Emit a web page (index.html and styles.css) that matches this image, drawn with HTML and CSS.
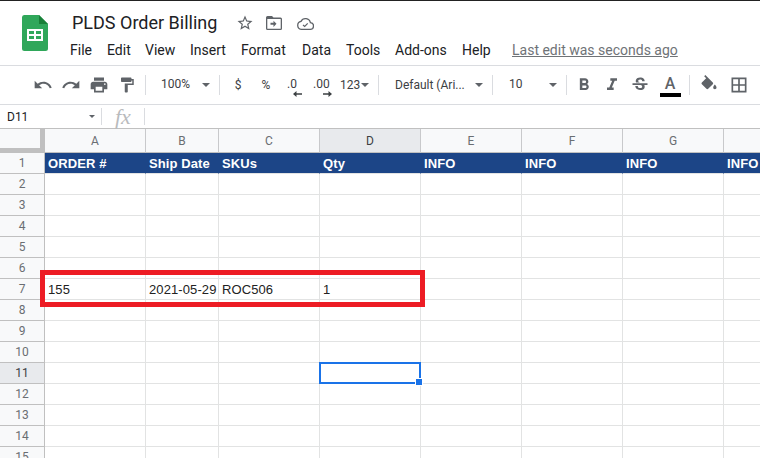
FILE: index.html
```html
<!DOCTYPE html>
<html lang="en">
<head>
<meta charset="utf-8">
<title>PLDS Order Billing</title>
<link rel="stylesheet" href="styles.css">
</head>
<body>
<div class="app">
  <header class="top">
    <svg class="logo" viewBox="0 0 26 36" width="26" height="36">
      <path fill="#2fa75a" d="M2 0H17L26 9V33.500A2.500 2.500 0 0 1 23.500 36H2.500A2.500 2.500 0 0 1 0 33.500V2.500A2.500 2.500 0 0 1 2 0Z"/>
      <path fill="#188038" d="M17 0L26 9H17Z"/>
      <path fill="#fff" fill-rule="evenodd" d="M5 14H21V26H5ZM7 16V19H12V16ZM14 16V19H19V16ZM7 21V24H12V21ZM14 21V24H19V21Z"/>
    </svg>
    <div class="titles">
      <div class="title-row">
        <span class="doc-title">PLDS Order Billing</span>
        <svg class="star" viewBox="0 0 24 24" width="18" height="18"><path d="M22 9.240l-7.190-.62L12 2 9.190 8.630 2 9.240l5.460 4.730L5.820 21 12 17.270 18.180 21l-1.630-7.030L22 9.240zM12 15.400l-3.760 2.270 1-4.280-3.320-2.880 4.380-.38L12 6.100l1.710 4.040 4.380.38-3.320 2.880 1 4.280L12 15.400z"/></svg>
        <svg class="move" viewBox="0 0 16 14" width="16" height="14"><path fill-rule="evenodd" d="M1.500 0H6L7.500 1.500H14.500A1.500 1.500 0 0 1 16 3V12.500A1.500 1.500 0 0 1 14.500 14H1.500A1.500 1.500 0 0 1 0 12.500V1.500A1.500 1.500 0 0 1 1.500 0ZM1.300 3V12.700H14.700V3ZM7.500 4.700L10.500 7.800L7.500 10.900V8.800H4.500V6.800H7.500Z"/></svg>
        <svg class="cloud" viewBox="0 0 17 13" width="17" height="13"><path fill="none" stroke="#5f6368" stroke-width="1.300" d="M4.200 12.300H13A3.300 3.300 0 0 0 13.400 5.700A5 5 0 0 0 4 4.400A4 4 0 0 0 4.200 12.300Z"/><path fill="none" stroke="#5f6368" stroke-width="1.200" d="M6 8L7.700 9.500L10.700 6.300"/></svg>
      </div>
      <nav class="menu">
        <span class="m-file">File</span><span class="m-edit">Edit</span><span class="m-view">View</span><span class="m-insert">Insert</span><span class="m-format">Format</span><span class="m-data">Data</span><span class="m-tools">Tools</span><span class="m-addons">Add-ons</span><span class="m-help">Help</span><span class="last-edit">Last edit was seconds ago</span>
      </nav>
    </div>
  </header>

  <div class="toolbar">
    <span class="tb"><svg viewBox="0 0 24 24" width="20" height="20"><path d="M12.500 8c-2.650 0-5.050.99-6.900 2.600L2 7v9h9l-3.620-3.620c1.390-1.160 3.160-1.880 5.120-1.880 3.540 0 6.550 2.310 7.600 5.500l2.370-.78C21.080 11.030 17.150 8 12.500 8z"/></svg></span>
    <span class="tb"><svg viewBox="0 0 24 24" width="20" height="20"><path d="M18.400 10.600C16.550 8.990 14.150 8 11.500 8c-4.650 0-8.580 3.030-9.960 7.220L3.900 16c1.050-3.190 4.050-5.500 7.600-5.500 1.950 0 3.730.72 5.120 1.880L13 16h9V7l-3.600 3.600z"/></svg></span>
    <span class="tb"><svg viewBox="0 0 24 24" width="20" height="20"><path d="M19 8H5c-1.660 0-3 1.340-3 3v6h4v4h12v-4h4v-6c0-1.660-1.340-3-3-3zm-3 11H8v-5h8v5zm3-7c-.55 0-1-.45-1-1s.45-1 1-1 1 .45 1 1-.45 1-1 1zm-1-9H6v4h12V3z"/></svg></span>
    <span class="tb"><svg viewBox="0 0 24 24" width="18" height="18"><path d="M18 4V3c0-.55-.45-1-1-1H5c-.55 0-1 .45-1 1v4c0 .55.45 1 1 1h12c.55 0 1-.45 1-1V6h1v4H9v11c0 .55.45 1 1 1h2c.55 0 1-.45 1-1v-9h8V4h-3z"/></svg></span>
    <span class="sep sep-a"></span>
    <span class="tsel w-zoom"><span class="tval tval-up">100%</span><i class="caret"></i></span>
    <span class="sep"></span>
    <span class="tb tx tb-dollar">$</span>
    <span class="tb tx">%</span>
    <span class="tb dec dec-one"><span class="dec-t">.0</span><svg viewBox="0 0 9 6" width="9" height="6"><path d="M0 3L3.500 0V2.300H9V3.700H3.500V6Z"/></svg></span>
    <span class="tb dec dec-two"><span class="dec-t">.00</span><svg viewBox="0 0 9 6" width="9" height="6"><path d="M9 3L5.500 0V2.300H0V3.700H5.500V6Z"/></svg></span>
    <span class="tsel w-123"><span class="tval">123</span><i class="caret caret-near"></i></span>
    <span class="sep"></span>
    <span class="tsel w-font"><span class="tval">Default (Ari...</span><i class="caret"></i></span>
    <span class="sep"></span>
    <span class="tsel w-size"><span class="tval tval-up">10</span><i class="caret"></i></span>
    <span class="sep"></span>
    <span class="tb tb-b"><svg viewBox="0 0 24 24" width="20" height="20"><path d="M15.600 10.790c.97-.67 1.650-1.770 1.650-2.790 0-2.260-1.750-4-4-4H7v14h7.040c2.090 0 3.710-1.700 3.710-3.790 0-1.520-.86-2.820-2.150-3.420zM10 6.500h3c.83 0 1.500.67 1.500 1.500s-.67 1.500-1.500 1.500h-3v-3zm3.500 9H10v-3h3.500c.83 0 1.500.67 1.500 1.500s-.67 1.500-1.500 1.500z"/></svg></span>
    <span class="tb"><svg viewBox="0 0 24 24" width="20" height="20"><path d="M10 4v3h2.210l-3.420 8H6v3h8v-3h-2.210l3.420-8H18V4z"/></svg></span>
    <span class="tb"><svg viewBox="0 0 24 24" width="20" height="20"><path d="M6.850 7.080C6.850 4.370 9.450 3 12.240 3c1.640 0 3 .49 3.900 1.280.77.65 1.460 1.730 1.460 3.240h-3.010c0-.31-.05-.59-.15-.85-.29-.86-1.200-1.280-2.250-1.280-1.860 0-2.340 1.020-2.340 1.700 0 .48.25.88.74 1.210.38.25.77.48 1.410.7H7.390c-.21-.34-.54-.89-.54-1.920zM21 12v-2H3v2h9.620c1.150.45 1.960.75 1.960 1.970 0 1-.81 1.670-2.280 1.670-1.540 0-2.930-.54-2.930-2.510H6.400c0 .55.08 1.130.24 1.580.81 2.290 3.290 3.300 5.670 3.300 2.270 0 5.300-.89 5.300-4.050 0-.3-.01-1.160-.48-1.940H21V12z"/></svg></span>
    <span class="tb tb-color"><span class="color-a">A</span><span class="color-bar"></span></span>
    <span class="sep sep-b"></span>
    <span class="tb tb-fill"><svg viewBox="0 0 24 24" width="20" height="20"><path d="M16.560 8.940L7.620 0 6.210 1.410l2.380 2.380-5.150 5.150c-.59.59-.59 1.540 0 2.120l5.500 5.500c.29.29.68.44 1.060.44s.77-.15 1.060-.44l5.500-5.500c.59-.58.59-1.530 0-2.120z"/><path d="M19 11.500s-2 2.170-2 3.500c0 1.100.9 2 2 2s2-.9 2-2c0-1.330-2-3.500-2-3.500z"/></svg></span>
    <span class="tb"><svg viewBox="0 0 24 24" width="20" height="20"><path d="M3 3v18h18V3H3zm8 16H5v-6h6v6zm0-8H5V5h6v6zm8 8h-6v-6h6v6zm0-8h-6V5h6v6z"/></svg></span>
  </div>

  <div class="formula">
    <span class="name-box">D11<i class="caret caret-small"></i></span>
    <span class="fx">fx</span>
  </div>

  <div class="sheet">
    <table class="grid">
      <colgroup><col class="c-row"><col class="c-wide"><col class="c-narrow"><col class="c-wide"><col class="c-wide"><col class="c-wide"><col class="c-wide"><col class="c-wide"><col class="c-wide"></colgroup>
      <thead>
        <tr><th class="corner"></th><th>A</th><th>B</th><th>C</th><th class="active">D</th><th>E</th><th>F</th><th>G</th><th>H</th></tr>
      </thead>
      <tbody>
        <tr class="banner"><th>1</th><td>ORDER #</td><td>Ship Date</td><td>SKUs</td><td>Qty</td><td>INFO</td><td>INFO</td><td>INFO</td><td>INFO</td></tr>
        <tr><th>2</th><td></td><td></td><td></td><td></td><td></td><td></td><td></td><td></td></tr>
        <tr><th>3</th><td></td><td></td><td></td><td></td><td></td><td></td><td></td><td></td></tr>
        <tr><th>4</th><td></td><td></td><td></td><td></td><td></td><td></td><td></td><td></td></tr>
        <tr><th>5</th><td></td><td></td><td></td><td></td><td></td><td></td><td></td><td></td></tr>
        <tr><th>6</th><td></td><td></td><td></td><td></td><td></td><td></td><td></td><td></td></tr>
        <tr><th>7</th><td>155</td><td>2021-05-29</td><td>ROC506</td><td>1</td><td></td><td></td><td></td><td></td></tr>
        <tr><th>8</th><td></td><td></td><td></td><td></td><td></td><td></td><td></td><td></td></tr>
        <tr><th>9</th><td></td><td></td><td></td><td></td><td></td><td></td><td></td><td></td></tr>
        <tr><th>10</th><td></td><td></td><td></td><td></td><td></td><td></td><td></td><td></td></tr>
        <tr><th class="active">11</th><td></td><td></td><td></td><td></td><td></td><td></td><td></td><td></td></tr>
        <tr><th>12</th><td></td><td></td><td></td><td></td><td></td><td></td><td></td><td></td></tr>
        <tr><th>13</th><td></td><td></td><td></td><td></td><td></td><td></td><td></td><td></td></tr>
        <tr><th>14</th><td></td><td></td><td></td><td></td><td></td><td></td><td></td><td></td></tr>
        <tr><th>15</th><td></td><td></td><td></td><td></td><td></td><td></td><td></td><td></td></tr>
      </tbody>
    </table>
    <div class="selection"><span class="handle"></span></div>
    <div class="callout"></div>
  </div>
</div>
</body>
</html>
```
FILE: styles.css
```css
* { box-sizing: border-box; }
html, body { margin: 0; padding: 0; background: #fff; }
body { width: 760px; height: 458px; overflow: hidden; font-family: Roboto, "Liberation Sans", sans-serif; color: #202124; }
.app { width: 760px; height: 458px; overflow: hidden; border-top: 1px solid #222; display: flex; flex-direction: column; }

.top { height: 65px; border-bottom: 1px solid #dadce0; display: flex; flex: none; padding-left: 22px; }
.logo { margin-top: 14px; flex: none; }
.titles { margin-left: 22px; display: flex; flex-direction: column; }
.title-row { display: flex; align-items: center; height: 22px; margin-top: 11px; padding-left: 2px; }
.doc-title { font-size: 18px; line-height: 22px; width: 146px; white-space: nowrap; color: #202124; }
.star { fill: #5f6368; margin-left: 18px; }
.move { fill: #5f6368; margin-left: 12px; }
.cloud { margin-left: 15px; }
.menu { display: flex; align-items: baseline; font-size: 14px; line-height: 18px; margin-top: 7px; white-space: nowrap; }
.menu span { display: block; }
.m-file { width: 37px; } .m-edit { width: 38px; } .m-view { width: 45px; } .m-insert { width: 51px; }
.m-format { width: 61px; } .m-data { width: 44px; } .m-tools { width: 49px; } .m-addons { width: 67px; } .m-help { width: 50px; }
.last-edit { color: #6f7377; text-decoration: underline; }

.toolbar { height: 39px; flex: none; border-bottom: 1px solid #dadce0; display: flex; align-items: center; padding-left: 29px; font-size: 12px; color: #3c4043; }
.tb { width: 28px; height: 28px; display: flex; align-items: center; justify-content: center; flex: none; }
.tb svg { fill: #5f6368; }
.tx { font-size: 12px; color: #3c4043; }
.tb-dollar { margin-left: 4px; }
.sep { width: 1px; height: 20px; background: #dadce0; flex: none; }
.sep-a { margin-left: 4px; }
.tsel { display: flex; align-items: center; height: 28px; flex: none; white-space: nowrap; }
.w-zoom { width: 73px; padding-left: 15px; }
.w-123 { width: 32px; margin-right: 6px; }
.w-font { width: 113px; padding-left: 16px; }
.w-size { width: 73px; padding-left: 16px; }
.tval { display: block; }
.tval-up { margin-bottom: 3px; }
.caret { display: block; margin-left: auto; margin-right: 9px; width: 0; height: 0; border-left: 4px solid transparent; border-right: 4px solid transparent; border-top: 4px solid #5f6368; }
.caret-near { margin-right: 3px; }
.caret-small { margin-left: auto; margin-right: 0; border-left-width: 3px; border-right-width: 3px; border-top-width: 3px; }
.dec { flex-direction: column; width: 30px; align-items: flex-start; justify-content: flex-start; padding-top: 6px; }
.dec svg { fill: #3c4043; margin-top: 0; }
.dec-t { font-size: 12px; line-height: 14px; height: 14px; }
.dec-one { padding-left: 7px; }
.dec-one svg { margin-left: 6px; }
.dec-two { padding-left: 3px; }
.dec-two svg { margin-left: 10px; }
.tb-b { margin-left: 3px; }
.tb-color { flex-direction: column; justify-content: flex-start; padding-top: 5px; margin-left: 2px; }
.color-a { font-size: 16px; font-weight: 500; line-height: 15px; color: #5f6368; }
.color-bar { width: 21px; height: 4px; background: #000; margin-top: 2px; flex: none; }
.sep-b { margin-left: 5px; }
.tb-fill { margin-left: 5px; }
.tb-fill + .tb { margin-left: 2px; }

.formula { height: 24px; flex: none; border-bottom: 1px solid #c0c0c0; display: flex; align-items: center; font-size: 12px; color: #202124; }
.name-box { width: 102px; height: 17px; border-right: 1px solid #dadce0; padding: 0 6px 0 7px; display: flex; align-items: center; }
.fx { width: 43px; height: 17px; border-right: 1px solid #dadce0; font-family: "Liberation Serif", serif; font-style: italic; font-size: 22px; line-height: 17px; color: #b9bbbd; padding-left: 13px; }

.sheet { flex: 1; position: relative; overflow: hidden; }
.grid { border-collapse: separate; border-spacing: 0; table-layout: fixed; width: 824px; font-family: "Liberation Sans", Arial, sans-serif; }
.c-row { width: 45px; } .c-wide { width: 101px; } .c-narrow { width: 73px; }
.grid th, .grid td { padding: 0; overflow: hidden; white-space: nowrap; }
.grid td { height: 21px; border-right: 1px solid #e2e3e3; border-bottom: 1px solid #e2e3e3; font-size: 13px; line-height: 19px; padding: 1px 3px 0 3px; color: #222; letter-spacing: 0.1px; }
.grid th { font-family: Roboto, "Liberation Sans", sans-serif; font-weight: 400; font-size: 12px; line-height: 14px; color: #6a6e72; background: #f8f9fa; text-align: center; border-right: 1px solid #c0c0c0; border-bottom: 1px solid #c0c0c0; height: 21px; }
.grid thead th { height: 24px; border-right-color: #c8c9cb; padding-top: 1px; }
.grid thead .corner { border-right: 5px solid #c0c0c0; border-bottom: 5px solid #c0c0c0; }
.grid th.active { background: #e8eaed; color: #3c4043; }
.banner td { background: #1c4587; color: #fff; font-weight: 700; border-right-color: #1c4587; }

.selection { position: absolute; left: 319px; top: 233px; width: 102px; height: 22px; border: 2px solid #1a73e8; }
.handle { position: absolute; right: -3px; bottom: -3px; width: 6px; height: 6px; background: #1a73e8; outline: 1px solid #fff; }
.callout { position: absolute; left: 40px; top: 141px; width: 385px; height: 37px; border: 5px solid #ed1c24; }
```
